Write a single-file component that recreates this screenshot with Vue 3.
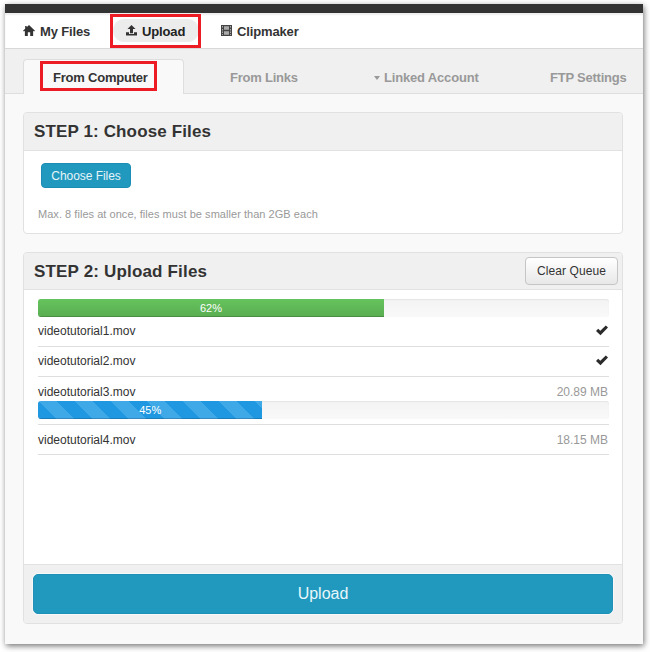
<script setup>
const files = [
  { name: 'videotutorial1.mov', done: true },
  { name: 'videotutorial2.mov', done: true },
  { name: 'videotutorial3.mov', size: '20.89 MB', progress: '45%', fill: 39.3 },
  { name: 'videotutorial4.mov', size: '18.15 MB' },
]
</script>

<template>
  <div class="window">
    <div class="topbar"></div>
    <nav class="nav">
      <a class="nav-item home">
        <svg width="12" height="11" viewBox="0 0 13 12"><path d="M6.500 0L13 6.300L12 7.200L11 6.300V12H7.800V8H5.200V12H2V6.300L1 7.200L0 6.300L2.300 4.100V1H4V2.400Z" fill="#333" /></svg>
        <span>My Files</span>
      </a>
      <a class="nav-item active">
        <svg width="11" height="11" viewBox="0 0 11 11"><path d="M5.500 0L9.500 4H7V8.200H4V4H1.500ZM0 7.200H3V9H8V7.200H11V10.500H0Z" fill="#333" /></svg>
        <span>Upload</span>
        <i class="mark mark-nav"></i>
      </a>
      <a class="nav-item clip">
        <svg width="11" height="11" viewBox="0 0 11 11"><path d="M0 0H11V11H0Z" fill="#444" /><path d="M3 1.200H8V4.700H3ZM3 6.200H8V9.800H3Z" fill="#aaa" /><path d="M1 1H2V2.500H1ZM1 4H2V5.500H1ZM1 6.500H2V8H1ZM1 9H2V10H1ZM9 1H10V2.500H9ZM9 4H10V5.500H9ZM9 6.500H10V8H9ZM9 9H10V10H9Z" fill="#aaa" /></svg>
        <span>Clipmaker</span>
      </a>
    </nav>
    <div class="tabs">
      <a class="tab current"><span>From Computer</span><i class="mark mark-tab"></i></a>
      <a class="tab links"><span>From Links</span></a>
      <a class="tab account"><b class="caret"></b><span>Linked Account</span></a>
      <a class="tab ftp"><span>FTP Settings</span></a>
    </div>

    <section class="panel choose">
      <header class="head"><h2>STEP 1: Choose Files</h2></header>
      <div class="choose-body">
        <button class="btn-choose">Choose Files</button>
        <p>Max. 8 files at once, files must be smaller than 2GB each</p>
      </div>
    </section>

    <section class="panel queue">
      <header class="head">
        <h2 class="second">STEP 2: Upload Files</h2>
        <button class="btn-clear">Clear Queue</button>
      </header>
      <div class="list">
        <div class="track"><div class="bar green" :style="{ width: '60.6%' }">62%</div></div>
        <div v-for="f in files" :key="f.name" class="file" :class="{ uploading: f.progress, done: f.done }">
          <div class="line">
            <span class="name">{{ f.name }}</span>
            <svg v-if="f.done" class="check" width="12" height="11" viewBox="0 0 12 11"><path d="M0 5.900L2.200 3.700L4.300 5.700L9.800 0.500L12 2.500L4.500 10.300Z" fill="#2b2b2b" /></svg>
            <span v-else class="size">{{ f.size }}</span>
          </div>
          <div v-if="f.progress" class="track">
            <div class="bar blue" :style="{ width: f.fill + '%' }">{{ f.progress }}</div>
          </div>
        </div>
      </div>
      <footer class="foot"><button class="btn-upload">Upload</button></footer>
    </section>
  </div>
</template>

<style>
body { background: #fff; }
#app { display: flow-root; height: 652px; }
</style>

<style scoped>
* { box-sizing: border-box; }
.window {
  width: 638px; height: 640px; margin: 4px 0 0 5px;
  background: #f9f9f9; box-shadow: 1px 2px 6px rgba(0, 0, 0, .55);
  font-family: "Liberation Sans", Arial, sans-serif; color: #333;
}
.topbar { height: 9px; background: #333; }
.nav {
  height: 36px; display: flex; align-items: center; background: #fff;
  border-bottom: 1px solid #d8d8d8; box-shadow: inset 0 2px 2px #eee;
  font-size: 13px; font-weight: bold; padding-left: 18px; letter-spacing: -.14px;
}
.nav-item { display: flex; align-items: center; height: 23px; position: relative; }
.nav-item span { padding-top: 2px; }
.home { gap: 5px; width: 90px; }
.active { width: 86px; padding-left: 13px; gap: 5px; background: #ececec; border-radius: 12px; color: #222; }
.clip { margin-left: 22px; gap: 5px; }
.mark { position: absolute; border: 3px solid #ed1c24; }
.mark-nav { left: -3px; top: -5px; width: 91px; height: 34px; }
.mark-tab { left: 16px; top: 1px; width: 117px; height: 30px; }
.tabs {
  height: 45px; display: flex; align-items: flex-end; padding-left: 18px;
  background: #f0f0f0; box-shadow: inset 0 -1px #dedede;
  font-size: 13px; font-weight: bold; color: #999; letter-spacing: -.22px;
}
.tab { display: flex; align-items: center; height: 35px; padding-top: 2px; position: relative; white-space: nowrap; }
.current {
  width: 161px; padding: 0 0 0 29px; color: #333; background: #f9f9f9;
  border: 1px solid #dedede; border-bottom: 0; border-radius: 4px 4px 0 0;
}
.links { margin-left: 46px; width: 144px; }
.account { width: 176px; gap: 4px; letter-spacing: -.17px; }
.caret { border: 3px solid transparent; border-top: 4px solid #999; border-bottom: 0; }
.panel {
  width: 600px; margin-left: 18px; border: 1px solid #e1e1e1; border-radius: 4px;
  background: #fff; overflow: hidden;
}
.choose { height: 122px; margin-top: 18px; }
.queue { height: 372px; margin-top: 18px; display: flex; flex-direction: column; }
.head {
  height: 38px; background: #f0f0f0; border-bottom: 1px solid #e1e1e1;
  display: flex; align-items: center; justify-content: space-between; padding: 0 4px 0 10px;
}
.queue .head { height: 37px; }
h2 { margin: 0; font-size: 17px; line-height: 20px; letter-spacing: .13px; }
.second { letter-spacing: .17px; padding-top: 2px; }
button { font-family: inherit; padding: 0; }
.choose-body { padding: 12px 0 0 14px; }
.btn-choose {
  display: block; margin-left: 3px; width: 90px; height: 25px; border: 1px solid #1b8db4;
  border-radius: 4px; background: #2199bf; color: #e5f4f8; font-size: 12px; letter-spacing: -.05px;
}
p { margin: 19px 0 0; font-size: 11px; line-height: 14px; color: #999; white-space: nowrap; letter-spacing: .04px; }
.btn-clear {
  width: 93px; height: 28px; border: 1px solid #c5c5c5; border-radius: 4px; color: #333;
  background: linear-gradient(#fff, #e8e8e8); font-size: 12px; letter-spacing: .1px; white-space: nowrap;
}
.list { flex: 1; padding: 9px 13px 0 14px; }
.track {
  height: 18px; border-radius: 3px; overflow: hidden;
  background: linear-gradient(#f3f3f3, #f9f9f9); box-shadow: inset 0 1px 1px #e5e5e5;
}
.bar {
  height: 18px; color: #fff; text-align: center; font-size: 11px; line-height: 18px;
  box-shadow: inset 0 -1px rgba(0, 0, 0, .18);
}
.green { background: linear-gradient(#66c35d, #59ad51); }
.blue {
  background: linear-gradient(45deg, #3fa9e8 25%, #2098e1 25%, #2098e1 50%, #3fa9e8 50%, #3fa9e8 75%, #2098e1 75%) 0 0 / 36px 36px;
}
.file { height: 30px; border-bottom: 1px solid #dedede; }
.file.uploading { height: 48px; }
.line { height: 29px; display: flex; justify-content: space-between; align-items: center; font-size: 12px; }
.done .line { height: 27px; }
.uploading .line { height: 24px; padding-top: 6px; }
.check { margin-right: 1px; }
.size { color: #999; margin-right: 1px; }
.foot { height: 59px; padding: 9px 9px 0; background: #f0f0f0; border-top: 1px solid #e1e1e1; }
.btn-upload {
  display: block; width: 100%; height: 40px; border: 1px solid #1f91b6; border-radius: 5px;
  background: #2199bf; color: #e8f6fa; font-size: 16px; box-shadow: 0 0 0 1px #f8f8f8;
}
</style>
